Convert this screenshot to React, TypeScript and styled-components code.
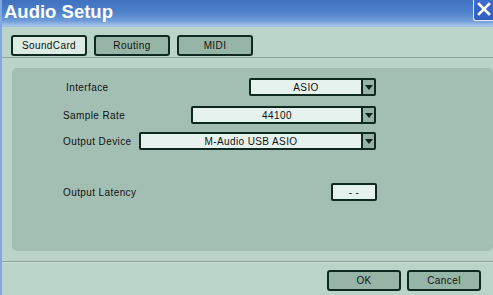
import React from "react";
import styled, { createGlobalStyle } from "styled-components";

const Global = createGlobalStyle`
  html, body { margin: 0; padding: 0; background: #bbd4c8; overflow: hidden; }
  * { box-sizing: border-box; }
`;

const Window = styled.div`
  width: 493px;
  height: 295px;
  display: flex;
  flex-direction: column;
  background: #bbd4c8;
  border-left: 2px solid #7fa8e2;
  font-family: "Liberation Sans", Arial, sans-serif;
  font-size: 10px;
  letter-spacing: 0.4px;
  color: #111;
  overflow: hidden;
`;

const TitleBar = styled.div`
  height: 27px;
  flex: none;
  display: flex;
  align-items: center;
  justify-content: space-between;
  background: linear-gradient(#3f72bf 0%, #4d80c9 45%, #6f9bd8 80%, #a9c7ec 100%);
  border-bottom: 1px solid #9fbfe4;
  margin-left: -2px;
`;

const Title = styled.div`
  font-family: "Liberation Sans", Arial, sans-serif;
  font-weight: bold;
  font-size: 18.5px;
  letter-spacing: 0;
  color: #ffffff;
  padding-left: 4px;
  margin-top: -3px;
`;

const CloseButton = styled.div`
  width: 20px;
  height: 24px;
  margin-top: -3px;
  align-self: flex-start;
  border: 1px solid #dfe9f8;
  border-right: none;
  border-radius: 3px 0 0 3px;
  background: linear-gradient(#3d6fd0, #2f5fc0);
  display: flex;
  align-items: center;
  justify-content: flex-start;
  padding-left: 3px;
`;

const TabRow = styled.div`
  height: 31px;
  flex: none;
  display: flex;
  gap: 7px;
  padding: 8px 0 0 9px;
  border-bottom: 1px solid #8ea99c;
`;

const Tab = styled.div<{ $active?: boolean }>`
  width: 76px;
  height: 21px;
  display: flex;
  align-items: center;
  justify-content: center;
  border: 2px solid #0f2820;
  border-radius: 3px;
  background: ${(p) => (p.$active ? "#dcebe4" : "#96b5a6")};
`;

const Panel = styled.div`
  flex: none;
  height: 183px;
  margin: 10px 0 0 10px;
  background: #a3bfb4;
  border-radius: 5px;
  padding: 10px 0 0 51px;
  display: grid;
  grid-template-columns: 1fr;
  align-content: start;
`;

const Row = styled.div<{ $gap: number }>`
  display: flex;
  align-items: center;
  justify-content: space-between;
  width: 313px;
  margin-bottom: ${(p) => p.$gap}px;
`;

const Label = styled.div<{ $indent?: number }>`
  padding-left: ${(p) => p.$indent ?? 0}px;
`;

const Select = styled.div<{ $width: number }>`
  width: ${(p) => p.$width}px;
  height: 18px;
  display: flex;
  border: 2px solid #0f2820;
  border-radius: 2px;
  background: #e6f2ee;
`;

const SelectValue = styled.div`
  flex: 1;
  display: flex;
  align-items: center;
  justify-content: center;
`;

const Arrow = styled.div`
  width: 13px;
  flex: none;
  border-left: 2px solid #0f2820;
  background: #97b2a6;
  display: flex;
  align-items: center;
  justify-content: center;
  &::after {
    content: "";
    border-left: 4px solid transparent;
    border-right: 4px solid transparent;
    border-top: 5px solid #10261f;
  }
`;

const Spacer = styled.div`
  height: 33px;
`;

const ValueBox = styled.div`
  width: 46px;
  height: 18px;
  border: 2px solid #0f2820;
  border-radius: 2px;
  background: #e6f2ee;
  display: flex;
  align-items: center;
  justify-content: center;
  margin-right: -1px;
  white-space: pre;
`;

const Footer = styled.div`
  flex: 1;
  margin-top: 10px;
  border-top: 1px solid #87a296;
  box-shadow: inset 0 1px 0 #cde0d7;
  display: flex;
  justify-content: flex-end;
  gap: 6px;
  padding: 8px 12px 0 0;
`;

const Button = styled.div`
  width: 74px;
  height: 21px;
  border: 2px solid #0f2820;
  border-radius: 3px;
  background: #96b5a6;
  display: flex;
  align-items: center;
  justify-content: center;
`;

export default function App() {
  return (
    <Window>
      <Global />
      <TitleBar>
        <Title>Audio Setup</Title>
        <CloseButton>
          <svg width="14" height="14" viewBox="0 0 14 14">
            <path d="M2 2 L12 12 M12 2 L2 12" stroke="#fff" strokeWidth="2.6" strokeLinecap="square" />
          </svg>
        </CloseButton>
      </TitleBar>
      <TabRow>
        <Tab $active>SoundCard</Tab>
        <Tab>Routing</Tab>
        <Tab>MIDI</Tab>
      </TabRow>
      <Panel>
        <Row $gap={10}>
          <Label $indent={3}>Interface</Label>
          <Select $width={127}>
            <SelectValue>ASIO</SelectValue>
            <Arrow />
          </Select>
        </Row>
        <Row $gap={8}>
          <Label>Sample Rate</Label>
          <Select $width={185}>
            <SelectValue>44100</SelectValue>
            <Arrow />
          </Select>
        </Row>
        <Row $gap={0}>
          <Label>Output Device</Label>
          <Select $width={237}>
            <SelectValue>M-Audio USB ASIO</SelectValue>
            <Arrow />
          </Select>
        </Row>
        <Spacer />
        <Row $gap={0}>
          <Label>Output Latency</Label>
          <ValueBox>- -</ValueBox>
        </Row>
      </Panel>
      <Footer>
        <Button>OK</Button>
        <Button>Cancel</Button>
      </Footer>
    </Window>
  );
}
